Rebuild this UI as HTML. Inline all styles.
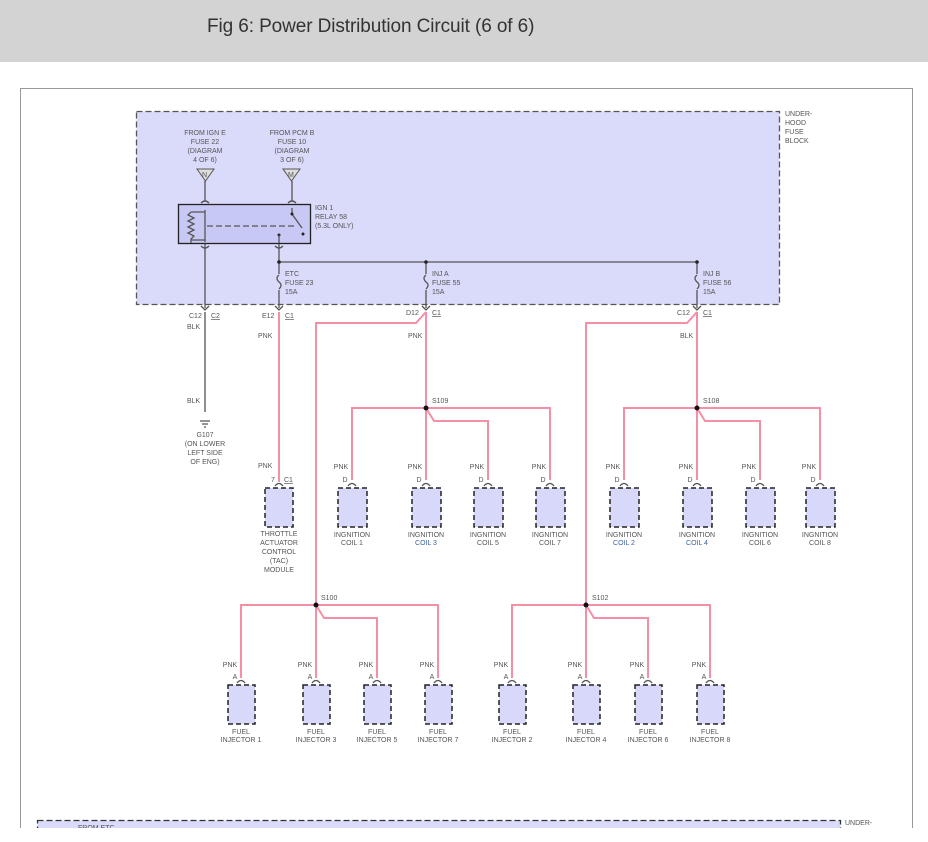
<!DOCTYPE html>
<html><head><meta charset="utf-8"><style>
html,body{margin:0;padding:0;background:#fff;width:928px;height:842px;overflow:hidden}
.hdr{position:absolute;left:0;top:0;width:928px;height:62px;background:#d3d3d3}
.hdr span{position:absolute;left:207px;top:16px;font:19px "Liberation Sans",sans-serif;color:#333;letter-spacing:-0.1px}
.wrap{position:absolute;left:0;top:0;width:928px;height:828px;overflow:hidden}
svg{position:absolute;left:0;top:0}
text{font-family:"Liberation Sans",sans-serif;font-size:7px;fill:#555}
.b{fill:#3a5fa0}
.p{stroke:#f58fa6;stroke-width:2;fill:none}
.k{stroke:#555;stroke-width:1.3;fill:none}
.bx{fill:#d8d8fa;stroke:#222;stroke-width:1.5;stroke-dasharray:5 3}
</style></head><body>
<div class="hdr"><span>Fig 6: Power Distribution Circuit (6 of 6)</span></div>
<div class="wrap">
<svg width="928" height="842" viewBox="0 0 928 842">
<rect x="20.5" y="88.5" width="892" height="760" fill="none" stroke="#999"/>
<rect x="136.5" y="111.5" width="643" height="193" fill="#dadafb" stroke="#555" stroke-width="1.3" stroke-dasharray="6 3"/>
<text x="785" y="116">UNDER-</text><text x="785" y="125">HOOD</text><text x="785" y="134">FUSE</text><text x="785" y="143">BLOCK</text>
<g text-anchor="middle">
<text x="205" y="135">FROM IGN E</text><text x="205" y="144">FUSE 22</text><text x="205" y="153">(DIAGRAM</text><text x="205" y="162">4 OF 6)</text>
<text x="292" y="135">FROM PCM B</text><text x="292" y="144">FUSE 10</text><text x="292" y="153">(DIAGRAM</text><text x="292" y="162">3 OF 6)</text>
</g>
<path d="M197 169h17l-8.5 12z M283 169h17l-8.5 12z" fill="#ddd" stroke="#555"/>
<text x="202" y="177">N</text><text x="288" y="177">M</text>
<path class="k" d="M205 181v20 M292 181v20"/>
<path class="k" d="M201 203q4-4 8 0 M288 203q4-4 8 0"/>
<rect x="178.5" y="204.5" width="132" height="39" fill="#c8c8f4" stroke="#222" stroke-width="1.3"/>
<path class="k" d="M205 210v32 M191 212h14 M191 240h14 M191 212l-3 3 6 3-6 3 6 3-6 3 6 3-6 3 6 3-3 3v4"/>
<path class="k" stroke-dasharray="6 3" d="M207 226h90"/>
<path class="k" d="M292 208v6 l10 14"/><circle cx="292" cy="214" r="1.5" fill="#222"/><circle cx="303" cy="234" r="1.5" fill="#222"/><circle cx="279" cy="235" r="1.5" fill="#222"/>
<path class="k" d="M279 235v8"/>
<text x="315" y="210">IGN 1</text><text x="315" y="219">RELAY 58</text><text x="315" y="228">(5.3L ONLY)</text>
<path class="k" d="M201 246q4 4 8 0 M275 246q4 4 8 0"/>
<path class="k" d="M205 244v64 M279 244v30 M279 290v18 M279 262h418 M426 262v12 M426 290v18 M697 262v12 M697 290v18"/>
<circle cx="279" cy="262" r="1.8" fill="#222"/><circle cx="426" cy="262" r="1.8" fill="#222"/><circle cx="697" cy="262" r="1.8" fill="#222"/>
<path class="k" d="M279 275q-4 3 0 7q4 3 0 7 M426 275q-4 3 0 7q4 3 0 7 M697 275q-4 3 0 7q4 3 0 7"/>
<text x="285" y="276">ETC</text><text x="285" y="285">FUSE 23</text><text x="285" y="294">15A</text>
<text x="432" y="276">INJ A</text><text x="432" y="285">FUSE 55</text><text x="432" y="294">15A</text>
<text x="703" y="276">INJ B</text><text x="703" y="285">FUSE 56</text><text x="703" y="294">15A</text>
<path class="k" d="M201 306l4 4 4-4 M275 306l4 4 4-4 M422 306l4 4 4-4 M693 306l4 4 4-4"/>
<text x="189" y="318">C12</text><text x="211" y="318" text-decoration="underline">C2</text>
<text x="262" y="318">E12</text><text x="285" y="318" text-decoration="underline">C1</text>
<text x="406" y="315">D12</text><text x="432" y="315" text-decoration="underline">C1</text>
<text x="677" y="315">C12</text><text x="703" y="315" text-decoration="underline">C1</text>
<path class="k" d="M205 312v100"/>
<text x="187" y="329">BLK</text><text x="187" y="403">BLK</text>
<path class="k" d="M200 421h10 M202 424h6 M204 427h2"/>
<g text-anchor="middle"><text x="205" y="437">G107</text><text x="205" y="446">(ON LOWER</text><text x="205" y="455">LEFT SIDE</text><text x="205" y="464">OF ENG)</text></g>
<path class="p" d="M279 312v170 M426 312v96 M426 312l-10 11h-100v282 M697 312v96 M697 312l-10 11h-101v282"/>
<text x="258" y="338">PNK</text><text x="408" y="338">PNK</text><text x="680" y="338">BLK</text>
<path class="p" d="M352 480v-72h198v72 M426 408v72 M426 408l8 13h54v59"/>
<path class="p" d="M624 480v-72h196v72 M697 408v72 M697 408l8 13h55v59"/>
<path class="p" d="M241 678v-73h197v73 M316 605v73 M316 605l8 13h53v60"/>
<path class="p" d="M512 678v-73h198v73 M586 605v73 M586 605l8 13h54v60"/>
<g fill="#111"><circle cx="426" cy="408" r="2.5"/><circle cx="697" cy="408" r="2.5"/><circle cx="316" cy="605" r="2.5"/><circle cx="586" cy="605" r="2.5"/></g>
<text x="432" y="403">S109</text><text x="703" y="403">S108</text><text x="321" y="600">S100</text><text x="592" y="600">S102</text>
<text x="258" y="468">PNK</text><text x="271" y="482">7</text><text x="284" y="482" text-decoration="underline">C1</text>
<path class="k" d="M275 486q4-5 8 0"/><rect class="bx" x="265" y="488" width="28" height="39"/>
<g text-anchor="middle"><text x="279" y="536">THROTTLE</text><text x="279" y="545">ACTUATOR</text><text x="279" y="554">CONTROL</text><text x="279" y="563">(TAC)</text><text x="279" y="572">MODULE</text></g>
<g text-anchor="middle">
<path class="k" d="M348 486q4-5 8 0 M422 486q4-5 8 0 M484 486q4-5 8 0 M546 486q4-5 8 0 M620 486q4-5 8 0 M693 486q4-5 8 0 M756 486q4-5 8 0 M816 486q4-5 8 0"/>
<rect class="bx" x="338" y="488" width="29" height="39"/><rect class="bx" x="412" y="488" width="29" height="39"/><rect class="bx" x="474" y="488" width="29" height="39"/><rect class="bx" x="536" y="488" width="29" height="39"/>
<rect class="bx" x="610" y="488" width="29" height="39"/><rect class="bx" x="683" y="488" width="29" height="39"/><rect class="bx" x="746" y="488" width="29" height="39"/><rect class="bx" x="806" y="488" width="29" height="39"/>
<text x="341" y="469">PNK</text><text x="415" y="469">PNK</text><text x="477" y="469">PNK</text><text x="539" y="469">PNK</text><text x="613" y="469">PNK</text><text x="686" y="469">PNK</text><text x="749" y="469">PNK</text><text x="809" y="469">PNK</text>
<text x="345" y="482">D</text><text x="419" y="482">D</text><text x="481" y="482">D</text><text x="543" y="482">D</text><text x="617" y="482">D</text><text x="690" y="482">D</text><text x="753" y="482">D</text><text x="813" y="482">D</text>
<text x="352" y="537">INGNITION</text><text x="352" y="545">COIL 1</text>
<text x="426" y="537">INGNITION</text><text x="426" y="545" class="b">COIL 3</text>
<text x="488" y="537">INGNITION</text><text x="488" y="545">COIL 5</text>
<text x="550" y="537">INGNITION</text><text x="550" y="545">COIL 7</text>
<text x="624" y="537">INGNITION</text><text x="624" y="545" class="b">COIL 2</text>
<text x="697" y="537">INGNITION</text><text x="697" y="545" class="b">COIL 4</text>
<text x="760" y="537">INGNITION</text><text x="760" y="545">COIL 6</text>
<text x="820" y="537">INGNITION</text><text x="820" y="545">COIL 8</text>
<path class="k" d="M237 683q4-5 8 0 M312 683q4-5 8 0 M373 683q4-5 8 0 M434 683q4-5 8 0 M508 683q4-5 8 0 M582 683q4-5 8 0 M644 683q4-5 8 0 M706 683q4-5 8 0"/>
<rect class="bx" x="228" y="685" width="27" height="39"/><rect class="bx" x="303" y="685" width="27" height="39"/><rect class="bx" x="364" y="685" width="27" height="39"/><rect class="bx" x="425" y="685" width="27" height="39"/>
<rect class="bx" x="499" y="685" width="27" height="39"/><rect class="bx" x="573" y="685" width="27" height="39"/><rect class="bx" x="635" y="685" width="27" height="39"/><rect class="bx" x="697" y="685" width="27" height="39"/>
<text x="230" y="667">PNK</text><text x="305" y="667">PNK</text><text x="366" y="667">PNK</text><text x="427" y="667">PNK</text><text x="501" y="667">PNK</text><text x="575" y="667">PNK</text><text x="637" y="667">PNK</text><text x="699" y="667">PNK</text>
<text x="235" y="679">A</text><text x="310" y="679">A</text><text x="371" y="679">A</text><text x="432" y="679">A</text><text x="506" y="679">A</text><text x="580" y="679">A</text><text x="642" y="679">A</text><text x="704" y="679">A</text>
<text x="241" y="734">FUEL</text><text x="241" y="742">INJECTOR 1</text>
<text x="316" y="734">FUEL</text><text x="316" y="742">INJECTOR 3</text>
<text x="377" y="734">FUEL</text><text x="377" y="742">INJECTOR 5</text>
<text x="438" y="734">FUEL</text><text x="438" y="742">INJECTOR 7</text>
<text x="512" y="734">FUEL</text><text x="512" y="742">INJECTOR 2</text>
<text x="586" y="734">FUEL</text><text x="586" y="742">INJECTOR 4</text>
<text x="648" y="734">FUEL</text><text x="648" y="742">INJECTOR 6</text>
<text x="710" y="734">FUEL</text><text x="710" y="742">INJECTOR 8</text>
</g>
<rect x="37.5" y="820.5" width="803" height="40" fill="#dadafb" stroke="#333" stroke-width="1.3" stroke-dasharray="6 3"/>
<text x="78" y="830">FROM ETC</text>
<text x="845" y="825">UNDER-</text>
</svg>
</div>
</body></html>
